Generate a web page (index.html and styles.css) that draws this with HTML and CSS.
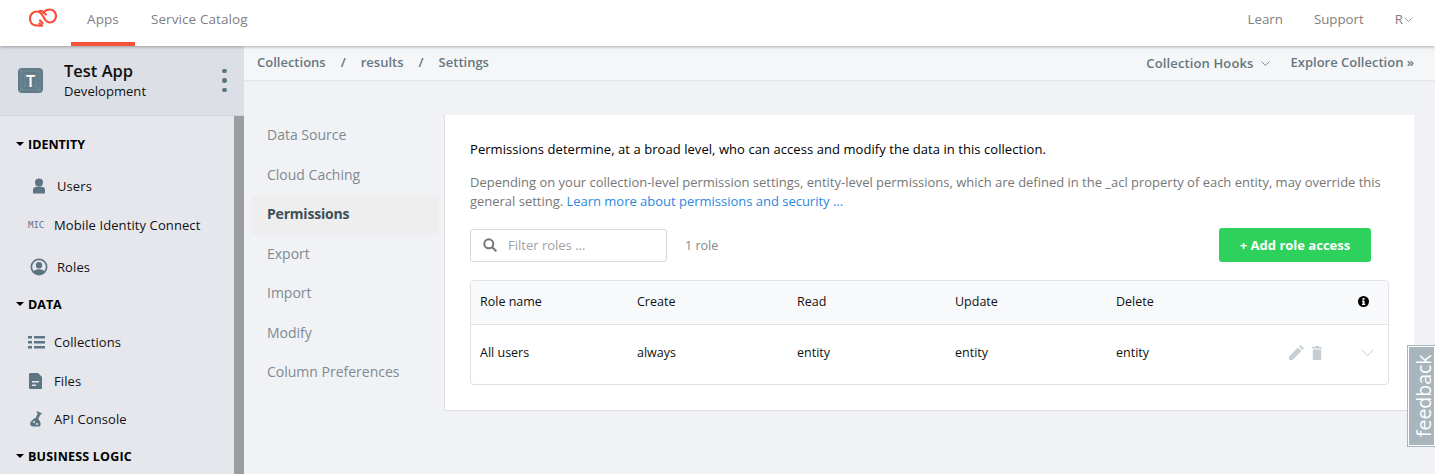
FILE: index.html
```html
<!DOCTYPE html>
<html lang="en">
<head>
    <meta charset="UTF-8">
    <title>Collection Settings</title>
    <link rel="stylesheet" href="styles.css">
</head>
<body>
    <header class="topbar">
        <svg class="logo" width="28" height="19" viewBox="0 0 28 19" fill="none" stroke="#f4523b" stroke-width="2.200" stroke-linecap="round">
            <path d="M13 17.500 C11 18 9.500 17.500 7.500 17.500 C3.500 17.500 1 14.500 1 10.500 C1 6.500 4 3.500 7.500 3.500 C11 3.500 13 6 14.500 9 C16 12 18 14.500 21 14.500 C24.500 14.500 27 11.500 27 8 C27 4.500 24.500 1.500 21 1.500 C18 1.500 16 2.500 14.500 4.500"/>
            <path d="M14.500 4.500 L17 6.500 M13 17.500 L10.500 15.500 M11 12.500 L13.500 15 M14.500 4.500 C13.500 3 12 2.500 10.500 3"/>
        </svg>
        <nav class="topnav">
            <a class="toplink active">Apps</a>
            <a class="toplink">Service Catalog</a>
        </nav>
        <div class="topright">
            <a class="toplink_r">Learn</a>
            <a class="toplink_r">Support</a>
            <a class="toplink_r user">R<svg width="9" height="5" viewBox="0 0 9 5" fill="none" stroke="#9a9a9a"><path d="M.5.5l4 4 4-4"/></svg></a>
        </div>
    </header>

    <div class="page">
        <aside class="sidebar">
            <div class="apphead">
                <div class="appicon">
                    <svg class="appicon_bg" width="25" height="25" viewBox="0 0 25 25" fill="none" stroke="#7d96a1" stroke-width=".6"><path d="M0 0l7 7M25 0l-7 7M0 25l7-7M25 25l-7-7M7 7h11v11H7zM3 3h19v19H3z"/></svg>
                    <span>T</span>
                </div>
                <div class="appinfo">
                    <div class="appname">Test App</div>
                    <div class="appenv">Development</div>
                </div>
                <div class="dots"><i></i><i></i><i></i></div>
            </div>
            <div class="sidescroll">
                <div class="sidemenu">
                    <div class="group first"><span class="caret"></span>IDENTITY</div>
                    <div class="item wide item_users">
                        <svg class="ico" width="16" height="16" viewBox="0 0 16 16" fill="#5d7582"><circle cx="8" cy="4.500" r="4"/><path d="M2 15.500 V11.500 C2 9.500 4 8.500 8 8.500 C12 8.500 14 9.500 14 11.500 V15.500 Z"/></svg>
                        <span>Users</span>
                    </div>
                    <div class="item item_mic">
                        <span class="mic">MIC</span>
                        <span>Mobile Identity Connect</span>
                    </div>
                    <div class="item wide item_roles">
                        <svg class="ico" width="18" height="18" viewBox="0 0 18 18" fill="#5d7582"><path fill-rule="evenodd" d="M9 .5a8.500 8.500 0 1 0 0 17 8.500 8.500 0 0 0 0-17zm0 1.800a6.700 6.700 0 0 1 5.300 10.800C13 11.700 11 11.200 9 11.200s-4 .5-5.300 1.900A6.700 6.700 0 0 1 9 2.300zm0 1.700a3.200 3.200 0 1 0 0 6.400 3.200 3.200 0 0 0 0-6.400z"/></svg>
                        <span>Roles</span>
                    </div>
                    <div class="group group_data"><span class="caret"></span>DATA</div>
                    <div class="item item_coll">
                        <svg class="ico" width="17" height="13" viewBox="0 0 17 13" fill="#5d7582"><path d="M0 0h4v2.500H0zM6 0h11v2.500H6zM0 5h4v2.500H0zM6 5h11v2.500H6zM0 10h4v2.500H0zM6 10h11v2.500H6z"/></svg>
                        <span>Collections</span>
                    </div>
                    <div class="item item_files">
                        <svg class="ico" width="17" height="16" viewBox="0 0 17 16" fill="#5d7582"><path fill-rule="evenodd" d="M2 0h8l4 4v11a1 1 0 0 1-1 1H2a1 1 0 0 1-1-1V1a1 1 0 0 1 1-1zm2 8v1.500h7V8zm0 3.500V13h4v-1.500z"/></svg>
                        <span>Files</span>
                    </div>
                    <div class="item item_api">
                        <svg class="ico" width="17" height="16" viewBox="0 0 17 16" fill="#5d7582"><path fill-rule="evenodd" d="M9 0l5 2.500-.8 1.300-.7-.3-2.300 4.500c2 1.800 2.800 4 2.300 6-.2 1-1 1.500-2 1.500H5c-2 0-3.200-1.500-2.800-3.200C2.700 10 5 8 7.800 6.700L9.800 2.200 8.500 1.500zM6 10a1 1 0 1 0 0 2 1 1 0 0 0 0-2zm3 2a1 1 0 1 0 0 2 1 1 0 0 0 0-2z"/></svg>
                        <span>API Console</span>
                    </div>
                    <div class="group group_biz"><span class="caret"></span>BUSINESS LOGIC</div>
                </div>
                <div class="scrollthumb"></div>
            </div>
        </aside>

        <main class="main">
            <div class="crumbbar">
                <div class="crumbs">
                    <span>Collections</span><span class="sep">/</span><span>results</span><span class="sep">/</span><span>Settings</span>
                </div>
                <div class="crumbright">
                    <span class="hooks">Collection Hooks<svg width="9" height="5" viewBox="0 0 9 5" fill="none" stroke="#7d8c96"><path d="M.5.5l4 4 4-4"/></svg></span>
                    <span class="explore">Explore Collection »</span>
                </div>
            </div>
            <div class="settings">
                <ul class="subnav">
                    <li>Data Source</li>
                    <li>Cloud Caching</li>
                    <li class="on">Permissions</li>
                    <li>Export</li>
                    <li>Import</li>
                    <li>Modify</li>
                    <li>Column Preferences</li>
                </ul>
                <section class="panel">
                    <p class="lead">Permissions determine, at a broad level, who can access and modify the data in this collection.</p>
                    <p class="desc">Depending on your collection-level permission settings, entity-level permissions, which are defined in the _acl property of each entity, may override this general setting. <a class="more">Learn more about permissions and security ...</a></p>
                    <div class="tools">
                        <div class="filter">
                            <svg width="14" height="14" viewBox="0 0 14 14" fill="none" stroke="#777" stroke-width="2"><circle cx="5.800" cy="5.800" r="4.500"/><path d="M9 9l4.300 4.300"/></svg>
                            <span>Filter roles ...</span>
                        </div>
                        <span class="count">1 role</span>
                        <button class="addbtn">+ Add role access</button>
                    </div>
                    <div class="roles">
                        <div class="row head">
                            <span class="c1">Role name</span><span class="c2">Create</span><span class="c3">Read</span><span class="c4">Update</span><span class="c5">Delete</span>
                            <svg class="info" width="11" height="11" viewBox="0 0 11 11"><circle cx="5.500" cy="5.500" r="5.500" fill="#000"/><path d="M4.500 2h2v1.700h-2zM4 4.500h2.500v3.200h.7V9H4V7.700h.7V5.800H4z" fill="#fff"/></svg>
                        </div>
                        <div class="row body">
                            <span class="c1">All users</span><span class="c2">always</span><span class="c3">entity</span><span class="c4">entity</span><span class="c5">entity</span>
                            <div class="actions">
                                <svg width="15" height="15" viewBox="0 0 15 15" fill="#c6ced3"><path d="M0 15v-3.500L9 2.500 12.500 6 3.500 15zM10 1.500L11.500 0 15 3.500 13.500 5z"/></svg>
                                <svg width="10" height="14" viewBox="0 0 10 14" fill="#c6ced3"><path d="M3.500 0h3l.5 1h3v1.500H0V1h3zM.8 3.500h8.400V14H.8z"/></svg>
                                <svg class="chev" width="13" height="7" viewBox="0 0 13 7" fill="none" stroke="#c6ced3"><path d="M.5.500l6 6 6-6"/></svg>
                            </div>
                        </div>
                    </div>
                </section>
            </div>
        </main>
    </div>

    <div class="feedback"><span>feedback</span></div>
</body>
</html>
```

FILE: styles.css
```css
*{
    margin: 0;
    padding: 0;
    box-sizing: border-box;
}

html,body{
    height: 100%;
    overflow: hidden;
}

body{
    font-family: "Open Sans", "Liberation Sans", sans-serif;
    font-size: 13px;
    color: #111;
    background-color: #f0f2f6;
}

.topbar{
    height: 46px;
    background-color: #fff;
    display: flex;
    align-items: flex-start;
    box-shadow: 0 1px 3px rgba(0, 0, 0, 0.3);
    position: relative;
    z-index: 3;
}

.logo{
    margin: 8px 0 0 29px;
}

.topnav{
    display: flex;
    margin-left: 14px;
}

.toplink{
    height: 46px;
    padding: 10px 16px 0;
    font-size: 13.500px;
    letter-spacing: 0.1px;
    color: #808080;
}

.toplink.active{
    border-bottom: 4px solid #f4523b;
}

.topright{
    margin-left: auto;
    display: flex;
    gap: 31px;
    padding: 10px 22px 0 0;
    font-size: 13.300px;
    color: #808080;
}

.user svg{
    margin: 0 0 2px 1px;
}

.page{
    display: flex;
    height: 428px;
}

.sidebar{
    width: 244px;
    flex-shrink: 0;
    background-color: #e6e7ed;
}

.apphead{
    height: 70px;
    background-color: #dcdfe6;
    border-bottom: 1px solid #d2d4da;
    display: flex;
    align-items: center;
    padding-left: 18px;
}

.appicon{
    width: 25px;
    height: 25px;
    border-radius: 4px;
    background-color: #5f7c88;
    color: #fff;
    font-size: 16px;
    font-weight: 600;
    display: flex;
    align-items: center;
    justify-content: center;
    position: relative;
    overflow: hidden;
}

.appicon_bg{
    position: absolute;
    left: 0;
    top: 0;
}

.appicon span{
    position: relative;
}

.appinfo{
    margin-left: 21px;
    width: 158px;
}

.appname{
    font-size: 16.500px;
    font-weight: 600;
    line-height: 20px;
}

.appenv{
    font-size: 13px;
    line-height: 20px;
    letter-spacing: 0.05px;
}

.dots{
    display: flex;
    flex-direction: column;
    gap: 5px;
}

.dots i{
    width: 4.500px;
    height: 4.500px;
    border-radius: 50%;
    background-color: #5d7582;
}

.sidescroll{
    display: flex;
    height: 358px;
}

.sidemenu{
    width: 234px;
    overflow: hidden;
}

.scrollthumb{
    width: 10px;
    background-color: #9b9da1;
}

.group{
    font-size: 12.500px;
    font-weight: 700;
    color: #000;
    height: 18px;
    line-height: 18px;
    padding-left: 16px;
    display: flex;
    align-items: center;
}

.group.first{
    margin-top: 20px;
}

.group_data{
    margin-top: 19px;
}

.group_biz{
    margin-top: 19px;
    letter-spacing: 0.2px;
}

.caret{
    width: 0;
    height: 0;
    border-left: 4px solid transparent;
    border-right: 4px solid transparent;
    border-top: 4px solid #000;
    margin-right: 4px;
    margin-bottom: 3px;
}

.item{
    display: flex;
    align-items: center;
    font-size: 13px;
    letter-spacing: 0.1px;
    color: #111;
    height: 20px;
    padding-left: 28px;
}

.item .ico{
    flex-shrink: 0;
    margin-right: 9px;
}

.item_users{
    margin-top: 22px;
    padding-left: 31px;
}

.item_users .ico{
    margin-right: 10px;
}

.item_mic{
    margin-top: 19px;
}

.item_roles{
    margin-top: 22px;
    padding-left: 30px;
}

.item_coll{
    margin-top: 18px;
}

.item_files{
    margin-top: 19px;
}

.item_api{
    margin-top: 18px;
}

.mic{
    font-family: "DejaVu Sans Mono", monospace;
    font-size: 9px;
    letter-spacing: 0;
    color: #5d7582;
    width: 26px;
}

.main{
    flex: 1;
    min-width: 0;
}

.crumbbar{
    height: 35px;
    background-color: #f5f6f8;
    border-bottom: 1px solid #e4e6ea;
    display: flex;
    justify-content: space-between;
    padding: 0 21px 0 13px;
    font-size: 13px;
    font-weight: 600;
    color: #66767f;
}

.crumbs{
    padding-top: 7px;
}

.sep{
    margin: 0 15px;
}

.crumbright{
    display: flex;
    gap: 21px;
    padding-top: 7px;
}

.hooks{
    padding-top: 1px;
    letter-spacing: 0.13px;
}

.hooks svg{
    margin: 0 0 2px 7px;
}

.settings{
    display: flex;
    padding: 34px 21px 0 8px;
}

.subnav{
    list-style: none;
    width: 187px;
    margin-right: 5px;
    flex-shrink: 0;
}

.subnav li{
    height: 39.500px;
    line-height: 39.500px;
    padding-left: 15px;
    font-size: 14px;
    color: #808a90;
}

.subnav li.on{
    height: 40px;
    line-height: 38px;
    margin-top: 1px;
    margin-bottom: -1.500px;
    background-color: #eeeeee;
    color: #3d4e58;
    font-weight: 700;
    letter-spacing: -0.2px;
    border-radius: 4px;
}

.panel{
    flex: 1;
    background-color: #fff;
    border-left: 1px solid #dcdee2;
    border-bottom: 1px solid #dcdee2;
    height: 296px;
    padding: 25px 25px 0 25px;
}

.lead{
    font-size: 13px;
    line-height: 18px;
    letter-spacing: 0.06px;
    color: #000;
}

.desc{
    margin-top: 15px;
    font-size: 13px;
    line-height: 19px;
    letter-spacing: -0.015px;
    color: #777;
}

.more{
    color: #2c87e0;
}

.tools{
    display: flex;
    align-items: center;
    margin-top: 17px;
}

.filter{
    width: 197px;
    height: 33px;
    border: 1px solid #d6d8dc;
    border-radius: 3px;
    display: flex;
    align-items: center;
    padding-left: 12px;
    gap: 11px;
    color: #a2a2a2;
}

.count{
    margin-left: 18px;
    font-size: 12.500px;
    color: #808a90;
}

.addbtn{
    margin-left: auto;
    margin-right: 18px;
    width: 152px;
    height: 34px;
    border: none;
    border-radius: 3px;
    background-color: #2dd15c;
    color: #fff;
    font-family: inherit;
    font-size: 13px;
    font-weight: 700;
}

.roles{
    margin-top: 18px;
    width: 919px;
    border: 1px solid #dfe1e4;
    border-radius: 4px;
    overflow: hidden;
}

.row{
    display: flex;
    align-items: center;
    font-size: 12.500px;
    padding-left: 9px;
    color: #111;
}

.row.head{
    height: 44px;
    padding-bottom: 2px;
    background-color: #f8f9fa;
    border-bottom: 1px solid #e2e4e6;
}

.row.body{
    height: 59px;
    padding-bottom: 4px;
}

.c1{
    width: 157px;
}

.c2{
    width: 160px;
}

.c3{
    width: 158px;
}

.c4{
    width: 161px;
}

.c5{
    width: 100px;
}

.info{
    margin-left: 142px;
}

.actions{
    margin-left: 73px;
    display: flex;
    align-items: center;
    gap: 8px;
}

.chev{
    margin-left: 31px;
}

.feedback{
    position: absolute;
    left: 1408px;
    top: 346px;
    width: 27px;
    height: 100px;
    background-color: #a8b5bc;
    border: 1px solid #fff;
    outline: 1px solid #a8b5bc;
    display: flex;
    align-items: center;
    justify-content: center;
    z-index: 4;
}

.feedback span{
    transform: rotate(-90deg) translateY(2px);
    color: #fff;
    font-size: 19.500px;
    line-height: 1;
}
```
